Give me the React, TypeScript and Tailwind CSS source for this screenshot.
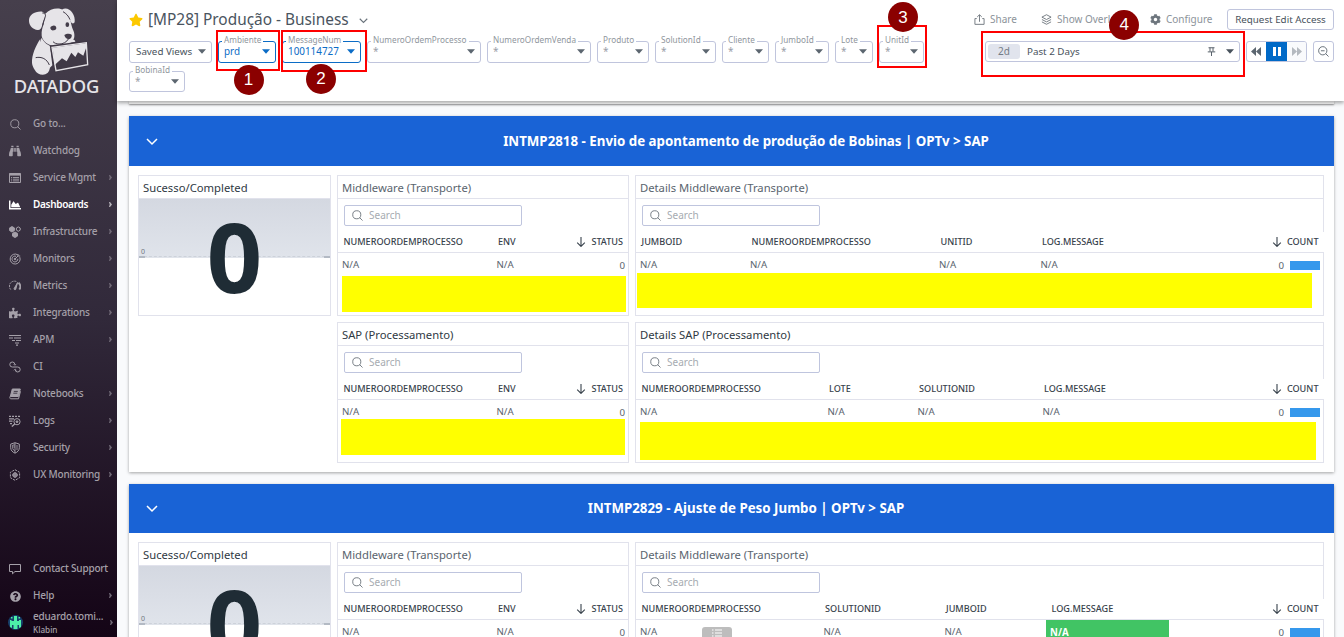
import React from "react";
import { FaBinoculars, FaChartArea, FaPuzzlePiece, FaQuestionCircle, FaStar, FaCog } from "react-icons/fa";

type IconProps = { children: React.ReactNode; className?: string; box?: string };

const Svg = ({ children, className = "size-3", box = "0 0 12 12" }: IconProps) => (
  <svg viewBox={box} className={className} fill="none" stroke="currentColor" strokeWidth="1" shapeRendering="geometricPrecision">
    {children}
  </svg>
);

const SearchIcon = ({ className = "size-3" }: { className?: string }) => (
  <Svg className={className}>
    <circle cx="5.2" cy="5.2" r="4.4" />
    <path d="M8.3 8.3l3.2 3.2" />
  </Svg>
);

const Caret = ({ className = "" }: { className?: string }) => (
  <svg viewBox="0 0 8 5" className={`h-[5px] w-2 shrink-0 ${className}`} fill="currentColor">
    <path d="M0 0.2h8L4 4.8z" />
  </svg>
);

const Chevron = ({ className = "" }: { className?: string }) => (
  <svg viewBox="0 0 12 8" className={className} fill="none" stroke="currentColor">
    <path d="M1 1l5 5 5-5" />
  </svg>
);

const DogLogo = () => (
  <svg viewBox="85 20 186 210" className="h-[70px] w-[62px]" fill="currentColor">
    <path d="M137 40C152 24 178 20 192 30l14 14c8 14 8 32 14 44 6 12 6 26-2 34-12 14-38 18-58 14-20-4-32-16-34-30-1-14 2-24 6-34z" />
    <path d="M88 62C87 44 106 32 128 34l8 6c2 10-6 22-8 34-2 10-8 16-14 15C100 87 89 78 88 62z" />
    <path d="M188 27c10-6 24 0 30 10 6 9 8 18 7 28-1 5-8 6-11 1-5-12-10-22-24-30z" />
    <path d="M126 112c8 16 20 24 34 27l-8 6 6 50-10 10c-8-18-18-28-36-30 0-20 6-44 14-63z" />
    <path d="M122 116c-14 20-26 48-25 72 1 8 4 14 8 20 6 12 20 18 32 14 12-4 16-18 12-30-4-12-16-20-28-16z" />
    <path d="M193 133l18-6 16-3c-1-5-6-7-12-4z" />
    <path d="M128 38c8 0 12 6 8 14-4 10-6 18-8 26M190 34c10 6 16 12 21 24" fill="none" stroke="#433c49" strokeWidth="3" />
    <path d="M108 172c18-4 34 4 41 22" fill="none" stroke="#413a47" strokeWidth="3" />
    <ellipse cx="161" cy="83" rx="9" ry="7" fill="#433c49" transform="rotate(-12 161 83)" />
    <ellipse cx="203" cy="73" rx="5.500" ry="7" fill="#433c49" />
    <path d="M194 104c6-4 16-5 22-1 2 5-2 12-9 14-6-1-12-6-13-13z" fill="#433c49" />
    <path d="M206 116c-4 8-16 16-28 15-8 0-14-3-18-7" fill="none" stroke="#433c49" strokeWidth="3" />
    <path d="M156 140l104-14 4 67-95 19z" fill="#403946" stroke="#403946" strokeWidth="10" />
    <path d="M157 141l103-14 4 66-95 18z" fill="none" stroke="currentColor" strokeWidth="4" />
    <path d="M159 142l100-13 1 12-9 25-16-10-8 14-12-13-14 26-14-9-22 20z" />
  </svg>
);

const ICONS: Record<string, React.ReactNode> = {
  goto: <SearchIcon className="size-[11px]" />,
  watchdog: <FaBinoculars className="size-3" />,
  service: (
    <Svg>
      <path d="M0.5 1.5h11v9h-11z" />
      <path d="M0 2.6h12" strokeWidth="2" />
      <path d="M2 5.5h1.2M4 5.5h6M2 7.2h1.2M4 7.2h6M2 8.9h1.2M4 8.9h6" strokeWidth="0.9" />
    </Svg>
  ),
  dashboards: <FaChartArea className="size-3" />,
  infra: (
    <Svg>
      <path d="M3 .6l2.4 1.3v2.7L3 6 .6 4.600V1.900zM6 6l2.500 1.400v2.700L6 11.500l-2.500-1.400V7.400z" fill="currentColor" />
      <path d="M9.300.9l1.900 1.100v2.200L9.300 5.300 7.400 4.200V2z" />
    </Svg>
  ),
  monitors: (
    <Svg>
      <path d="M10.800 4.200A5 5 0 1 1 8.800 1.800M8.800 5.800A2.900 2.900 0 1 1 7 3.300" />
      <path d="M6 6l3-3M9 3V1M9 3h2.200" />
      <circle cx="6" cy="6" r=".8" fill="currentColor" />
    </Svg>
  ),
  metrics: (
    <Svg>
      <path d="M1.700 9.500A5 5 0 0 1 7.500 1.600" strokeDasharray="2 .8" />
      <path d="M9.500 2.700a5 5 0 0 1 .8 6.800" strokeWidth="2" />
      <path d="M8.600 2.500L5 8.800a1 1 0 0 0 1.700.6z" fill="currentColor" />
    </Svg>
  ),
  integrations: <FaPuzzlePiece className="size-3" />,
  apm: (
    <Svg>
      <path d="M0 1.500h12M0 4h4M5 4h7M3 6.500h3M7 6.500h5M6 9h4M7 11.200h2" strokeWidth="1.200" />
    </Svg>
  ),
  ci: (
    <Svg>
      <path d="M5.800 3.500A2.500 2.500 0 1 0 3.400 6h5.200A2.500 2.500 0 1 1 6.200 8.500" />
      <path d="M4.600 3L5.900 4.300 7.100 3M4.900 9.300L6.200 8l1.300 1.300" strokeWidth=".8" />
    </Svg>
  ),
  notebooks: (
    <Svg>
      <path d="M3.300 1h8L9.400 8.500H1.300z" fill="currentColor" />
      <path d="M1 8.500c-.5 1.500 0 2.300.8 2.300h7.700l2-7.500" />
      <path d="M4.800 3.400h4M4.300 5.200h4" stroke="#2a2230" strokeWidth=".8" />
    </Svg>
  ),
  logs: (
    <Svg>
      <path d="M0 1.300h2M3 1.300h2M6 1.300h2M9 1.300h2M0 3.800h5M0 6.200h3.500M1 8.600h2" strokeWidth="1.200" />
      <circle cx="8" cy="6.700" r="3.100" />
      <circle cx="8" cy="6.700" r=".9" fill="currentColor" />
      <path d="M5.800 8.900l-3 2.700" strokeWidth="1.300" />
    </Svg>
  ),
  security: (
    <Svg>
      <path d="M6 .7l4.300 1.400v3.600c0 2.500-1.700 4.400-4.300 5.500-2.600-1.100-4.300-3-4.300-5.500V2.100z" />
      <path d="M6 1v10M6 3H3.700v3.500c.4 1.200 1.200 2 2.300 2.700M6 5H4.500M8 3v5" strokeWidth=".9" />
    </Svg>
  ),
  ux: (
    <Svg>
      <path d="M6 .7l4.600 2.600v5.400L6 11.300 1.400 8.700V3.300z" strokeDasharray="2.200 1" />
      <circle cx="6" cy="6" r="2.200" fill="currentColor" fillOpacity=".5" />
      <path d="M6 3v6M3 6h6" strokeWidth=".8" />
    </Svg>
  ),
  contact: (
    <Svg>
      <path d="M.5 1.500h11v7H6l-2.500 2.300V8.500h-3z" />
    </Svg>
  ),
  help: <FaQuestionCircle className="size-[11px]" />,
};

const NAV: [string, string, boolean][] = [
  ["goto", "Go to...", false],
  ["watchdog", "Watchdog", false],
  ["service", "Service Mgmt", true],
  ["dashboards", "Dashboards", true],
  ["infra", "Infrastructure", true],
  ["monitors", "Monitors", true],
  ["metrics", "Metrics", true],
  ["integrations", "Integrations", true],
  ["apm", "APM", true],
  ["ci", "CI", false],
  ["notebooks", "Notebooks", true],
  ["logs", "Logs", true],
  ["security", "Security", true],
  ["ux", "UX Monitoring", true],
];

const NavArrow = ({ className = "" }: { className?: string }) => (
  <svg viewBox="0 0 3 5" className={`h-[5px] w-[3px] shrink-0 ${className}`} fill="currentColor">
    <path d="M0 0h1l2 2.500L1 5H0l.7-2.500z" />
  </svg>
);

function NavItem({ icon, label, arrow }: { icon: string; label: string; arrow: boolean }) {
  const active = icon === "dashboards";
  return (
    <div className={`flex h-[27px] items-center pr-[5px] pl-[9px] ${active ? "text-white" : "text-[#a5a0a9]"}`}>
      <span className="flex w-3 shrink-0 justify-center pt-px">{ICONS[icon]}</span>
      <span className={`ml-3 flex-1 text-[10px] whitespace-nowrap ${active ? "font-semibold tracking-[-0.3px]" : "font-medium tracking-[-0.2px]"}`}>
        {label}
      </span>
      {arrow && <NavArrow className={active ? "text-[#b8b4bb]" : "text-[#716a77]"} />}
    </div>
  );
}

function Sidebar() {
  return (
    <nav className="flex h-full w-[117px] shrink-0 flex-col bg-linear-to-b from-[#463f4c] via-[#31293a] to-[#140516]">
      <div className="flex h-[110px] shrink-0 flex-col items-center pt-[7px] text-[#e6e4e8]">
        <DogLogo />
        <div className="-mt-1 pr-1 text-[18.400px] leading-[26px] font-medium tracking-[-0.1px]">DATADOG</div>
      </div>
      {NAV.map(([icon, label, arrow]) => (
        <NavItem key={icon} icon={icon} label={label} arrow={arrow} />
      ))}
      <div className="mt-auto mb-px">
        <NavItem icon="contact" label="Contact Support" arrow={false} />
        <NavItem icon="help" label="Help" arrow />
        <div className="flex h-[27px] items-center pr-1 pl-2 text-[#a5a0a9]">
          <svg viewBox="0 0 15 15" className="size-[15px] shrink-0">
            <circle cx="7.500" cy="7.500" r="7.500" fill="#17406b" />
            <path d="M6 1h3v5h2V5h2v7l-2 1v-3H9.500v4h-4v-4H4v3l-2-1V5h1.500v1H6z" fill="#4df0a8" />
            <path d="M3 2h1.500v1.500H3zM10.500 2H12v1.500h-1.500z" fill="#4df0a8" />
          </svg>
          <div className="ml-2.5 flex-1 leading-[13px] whitespace-nowrap">
            <div className="text-[10px] font-medium tracking-[-0.2px]">eduardo.tomi...</div>
            <div className="text-[8.200px] font-medium">Klabin</div>
          </div>
          <NavArrow className="text-[#716a77]" />
        </div>
      </div>
    </nav>
  );
}

type FilterProps = { label: string; value?: string; width: string; active?: boolean };

function Filter({ label, value, width, active }: FilterProps) {
  return (
    <div
      className={`relative flex h-[21.5px] shrink-0 items-center justify-between rounded-[3px] border pr-[5px] pl-[5px] ${width} ${
        active ? "border-[#0b6cc6] text-[#0b6cc6]" : "border-[#c0c5dd] text-[#5c6670]"
      }`}
    >
      <span className="absolute -top-[8px] left-[3px] bg-white px-0.5 text-[8.200px] leading-3 tracking-[0.02px] text-[#8f969d]">{label}</span>
      <span className={value ? "text-[9.900px]" : "text-[10px] text-[#9aa0a8]"}>{value ?? "*"}</span>
      <Caret />
    </div>
  );
}

const Callout = ({ n, place }: { n: number; place: string }) => (
  <div
    className={`absolute z-30 flex size-[30px] items-center justify-center rounded-full bg-[#8b0000] font-['Liberation_Sans',sans-serif] text-[17px] text-white ${place}`}
  >
    {n}
  </div>
);

const Frame = ({ place }: { place: string }) => <div className={`absolute z-20 border-2 border-[#fe0000] ${place}`} />;

function Header() {
  return (
    <header className="relative z-10 flex h-[101px] shrink-0 flex-col bg-white pl-3 shadow-[0_2px_4px_rgba(0,0,0,0.35)]">
      <div className="flex h-[39px] items-center">
        <FaStar className="size-[14px] text-[#fcc800]" />
        <h1 className="ml-[5px] text-[15.400px] text-[#4a545e]">[MP28] Produção - Business</h1>
        <Chevron className="mt-[3px] ml-2.5 h-[6px] w-[9px] stroke-[1.500] text-[#6b747d]" />
        <div className="mr-2.5 ml-auto flex items-center text-[10px] text-[#8c939a]">
          <Svg className="size-[11px] text-[#6d757d]">
            <path d="M3 5H1v6.300h10V5H9M6 8.500V1M3.500 3.200L6 .8l2.500 2.400" />
          </Svg>
          <span className="ml-[5px] w-[51px]">Share</span>
          <Svg className="size-[11px] text-[#6d757d]">
            <path d="M6 .8l5 2.600-5 2.600-5-2.600zM1 6l5 2.600L11 6M1 8.600l5 2.600 5-2.600" />
          </Svg>
          <span className="ml-[5px] w-[93px]">Show Overlays</span>
          <FaCog className="size-[11px] text-[#6d757d]" />
          <span className="ml-[5px] w-[61px]">Configure</span>
          <span className="flex h-[21px] w-[107px] items-center justify-center rounded-[3px] border border-[#c0c5dd] pt-px text-[9.800px] whitespace-nowrap text-[#48525c]">
            Request Edit Access
          </span>
        </div>
      </div>

      <div className="mt-0.5 flex">
        <div className="flex h-[21.5px] w-[83px] items-center justify-between rounded-[3px] border border-[#c0c5dd] pr-[5px] pl-[6px] text-[9.800px] text-[#48525c]">
          <span className="pt-px whitespace-nowrap">Saved Views</span>
          <Caret className="text-[#5c6670]" />
        </div>
        <div className="ml-1.5 flex gap-1.5">
          <Filter label="Ambiente" value="prd" width="w-[58px]" active />
          <Filter label="MessageNum" value="100114727" width="w-[79px]" active />
          <Filter label="NumeroOrdemProcesso" width="w-[114px]" />
          <Filter label="NumeroOrdemVenda" width="w-[104px]" />
          <Filter label="Produto" width="w-[52px]" />
          <Filter label="SolutionId" width="w-[61px]" />
          <Filter label="Cliente" width="w-[47px]" />
          <Filter label="JumboId" width="w-[54px]" />
          <Filter label="Lote" width="w-[38px]" />
          <Filter label="UnitId" width="w-[45px]" />
        </div>
        <div className="mr-2.5 ml-auto flex">
          <div className="flex h-[21px] w-[255px] items-center rounded-[3px] border border-[#c0c5dd] px-0.5 text-[10px] text-[#48525c]">
            <span className="flex h-[15px] w-8 items-center justify-center rounded-[3px] bg-[#e1e4ed] text-[#747c86]">2d</span>
            <span className="ml-[7px] flex-1 pt-px text-[9.800px]">Past 2 Days</span>
            <Svg className="mr-2.5 size-[9px] text-[#48525c]">
              <path d="M2 1h8M4 1v5M8 1v5M1 6.500h10M6 6.500V12" strokeWidth="1.200" />
            </Svg>
            <Caret className="mr-[3px]" />
          </div>
          <div className="ml-1.5 flex h-[21px] w-[61px] overflow-hidden rounded-[3px] border border-[#c0c5dd]">
            <span className="flex w-[19px] items-center justify-center pr-[2px] text-[#5c6670]">
              <svg viewBox="0 0 10 9" className="h-[9px] w-2.5" fill="currentColor">
                <path d="M5 0v9L0 4.500zM10 0v9L5 4.500z" />
              </svg>
            </span>
            <span className="-my-px flex w-[21px] items-center justify-center gap-0.5 bg-[#0069c7]">
              <i className="h-[9px] w-[3px] bg-white" />
              <i className="h-[9px] w-[3px] bg-white" />
            </span>
            <span className="flex flex-1 items-center justify-center bg-[#f9fafc] text-[#b4b9bf]">
              <svg viewBox="0 0 10 9" className="h-[9px] w-2.5" fill="currentColor">
                <path d="M0 0v9l5-4.500zM5 0v9l5-4.500z" />
              </svg>
            </span>
          </div>
          <div className="ml-1.5 flex size-[21px] items-center justify-center rounded-[3px] border border-[#c0c5dd] text-[#5c6670]">
            <Svg className="size-[11px]">
              <circle cx="5.200" cy="5.200" r="4.500" />
              <path d="M8.500 8.500l3 3M3.200 5.200h4" />
            </Svg>
          </div>
        </div>
      </div>
      <div className="mt-[8px] flex">
        <Filter label="BobinaId" width="w-[56px]" />
      </div>

      <Frame place="left-[99px] top-[30px] h-[41px] w-[64px]" />
      <Frame place="left-[164px] top-[30px] h-[42px] w-[86px]" />
      <Frame place="left-[760px] top-[25px] h-[43px] w-[50px]" />
      <Frame place="left-[864px] top-[31px] h-[46px] w-[264px]" />
      <Callout n={1} place="left-[116.5px] top-[64.5px]" />
      <Callout n={2} place="left-[189px] top-[63.5px]" />
      <Callout n={3} place="left-[771px] top-[2.3px]" />
      <Callout n={4} place="left-[992.3px] top-[9.5px]" />
    </header>
  );
}

function ValueCard() {
  return (
    <div className="flex h-[141px] w-[193px] shrink-0 flex-col border border-[#e1e2ec]">
      <div className="flex h-[23px] shrink-0 items-center border-b border-[#e1e2ec] pt-0.5 pl-[4px] text-[11.250px] text-[#2f3943]">Sucesso/Completed</div>
      <div className="relative flex-1">
        <div className="flex h-[59px] items-end bg-linear-to-b from-[#d4d8e1] to-[#e0e4eb]">
          <div className="flex h-2.5 w-full flex-col justify-end">
            <span className="pl-0.5 text-[7px] leading-2 text-[#6f7780]">0</span>
            <div className="flex h-[2px] items-start justify-between border-t border-dashed border-[#cdd2da]">
              <i className="-mt-px h-[2px] w-1.5 bg-[#b3bac4]" />
              <i className="-mt-px h-[2px] w-1.5 bg-[#b3bac4]" />
            </div>
          </div>
        </div>
        <div className="absolute inset-x-0 top-0 bottom-[3px] flex items-center justify-center text-[97px] leading-none font-bold text-[#1f2c35]">0</div>
      </div>
    </div>
  );
}

type Column = { name: string; width: string; green?: boolean };

type TableProps = {
  title: string;
  dark?: boolean;
  columns: Column[];
  measure: string;
  bar?: boolean;
  mark?: string;
};

function TableCard({ title, dark, columns, measure, bar, mark }: TableProps) {
  return (
    <div className={`relative flex h-[141px] flex-col border border-[#e1e2ec] ${bar ? "w-[689px]" : "w-[292px]"}`}>
      <div
        className={`flex h-[23px] shrink-0 items-center border-b border-[#e1e2ec] pt-0.5 pl-[4px] text-[11.250px] ${dark ? "text-[#2f3943]" : "text-[#5a646e]"}`}
      >
        {title}
      </div>
      <div className="mt-[6px] ml-[6px] flex h-[21px] w-[178px] shrink-0 items-center rounded-[2px] border border-[#bfc5de] pl-[7px]">
        <SearchIcon className="size-[11px] text-[#6d757d]" />
        <span className="ml-[6px] text-[10px] text-[#a6abb1]">Search</span>
      </div>
      <div
        className={`relative mt-[6px] flex h-[20.500px] shrink-0 items-center border-b border-[#e1e2ec] bg-white pt-px pl-[5.500px] text-[9.100px] font-medium text-[#38424c] ${
          bar ? "-mr-px" : ""
        }`}
      >
        {columns.map((c) => (
          <span key={c.name} className={`${c.width} shrink-0 whitespace-nowrap`}>
            {c.name}
          </span>
        ))}
        <span className={`ml-auto flex items-center gap-[5px] ${bar ? "pr-[5.500px]" : "pr-[5px]"}`}>
          <Svg className="size-[10px]" box="0 0 10 10">
            <path d="M5 0v9.300M1.200 5.700L5 9.400l3.800-3.700" strokeWidth="1.100" />
          </Svg>
          {measure}
        </span>
      </div>
      <div className="flex h-[24px] shrink-0 items-center pt-[2px] pl-[4px] text-[9.700px] text-[#5a646e]">
        {columns.map((c) => (
          <span key={c.name} className={`${c.width} shrink-0`}>
            {c.green ? (
              <span className="-mt-[5px] -ml-[4.500px] flex h-[20px] w-[123px] items-center bg-[#41c464] pt-[5px] pl-[4.500px] leading-[13px] font-bold text-white">
                N/A
              </span>
            ) : (
              "N/A"
            )}
          </span>
        ))}
        <span className="ml-auto flex items-center gap-[6px] pt-px pr-[3px]">
          0{bar && <i className="h-[9px] w-[30px] bg-[#3598ec]" />}
        </span>
      </div>
      {mark && <div className={`absolute z-10 bg-[#ffff00] ${mark}`} />}
    </div>
  );
}

const MAIN_COLS: Column[] = [
  { name: "NUMEROORDEMPROCESSO", width: "w-[154.5px]" },
  { name: "ENV", width: "w-[40px]" },
];

function Group({ title, height, headHeight, children }: { title: string; height: string; headHeight: string; children: React.ReactNode }) {
  return (
    <section className={`flex shrink-0 flex-col bg-white shadow-[0_1px_3px_rgba(0,0,0,0.35)] ${height}`}>
      <div className={`flex shrink-0 items-center bg-[#1963d6] pl-[17px] text-white ${headHeight}`}>
        <Chevron className="mt-px h-2 w-3 stroke-[1.500]" />
        <h2 className="flex-1 pt-px text-center text-[13.320px] font-bold">{title}</h2>
      </div>
      <div className="flex gap-1.5 pt-[9px] pl-[9px]">{children}</div>
    </section>
  );
}

export default function App() {
  return (
    <div className="flex h-[637px] w-[1344px] overflow-hidden bg-[#f9fafc] font-['Noto_Sans',sans-serif]">
      <Sidebar />
      <div className="flex h-full w-[1227px] flex-col">
        <Header />
        <main className="flex min-h-0 flex-1 flex-col overflow-hidden pr-2.5 pl-3">
          <div className="h-[3px] shrink-0 bg-white shadow-[0_1px_2px_rgba(0,0,0,0.4)]" />
          <div className="mt-3 flex flex-col gap-3">
            <Group title="INTMP2818 - Envio de apontamento de produção de Bobinas | OPTv > SAP" height="h-[356px]" headHeight="h-[50px]">
              <ValueCard />
              <div className="flex flex-col gap-1.5">
                <TableCard title="Middleware (Transporte)" columns={MAIN_COLS} measure="STATUS" mark="left-[4px] top-[100px] h-[36px] w-[284px]" />
                <TableCard title="SAP (Processamento)" dark columns={MAIN_COLS} measure="STATUS" mark="left-[3px] top-[96px] h-[36px] w-[284px]" />
              </div>
              <div className="flex flex-col gap-1.5">
                <TableCard
                  title="Details Middleware (Transporte)"
                  bar
                  columns={[
                    { name: "JUMBOID", width: "w-[110px]" },
                    { name: "NUMEROORDEMPROCESSO", width: "w-[189px]" },
                    { name: "UNITID", width: "w-[101.500px]" },
                    { name: "LOG.MESSAGE", width: "w-[120px]" },
                  ]}
                  measure="COUNT"
                  mark="left-[1px] top-[97px] h-[35px] w-[675px]"
                />
                <TableCard
                  title="Details SAP (Processamento)"
                  dark
                  bar
                  columns={[
                    { name: "NUMEROORDEMPROCESSO", width: "w-[187.500px]" },
                    { name: "LOTE", width: "w-[90px]" },
                    { name: "SOLUTIONID", width: "w-[125px]" },
                    { name: "LOG.MESSAGE", width: "w-[120px]" },
                  ]}
                  measure="COUNT"
                  mark="left-[4px] top-[99px] h-[38px] w-[676px]"
                />
              </div>
            </Group>
            <Group title="INTMP2829 - Ajuste de Peso Jumbo | OPTv > SAP" height="h-[356px]" headHeight="h-[49px]">
              <ValueCard />
              <TableCard title="Middleware (Transporte)" columns={MAIN_COLS} measure="STATUS" />
              <div className="relative">
                <TableCard
                  title="Details Middleware (Transporte)"
                  bar
                  columns={[
                    { name: "NUMEROORDEMPROCESSO", width: "w-[183.500px]" },
                    { name: "SOLUTIONID", width: "w-[121px]" },
                    { name: "JUMBOID", width: "w-[105.500px]" },
                    { name: "LOG.MESSAGE", width: "w-[120px]", green: true },
                  ]}
                  measure="COUNT"
                />
                <div className="absolute top-[85px] left-[67px] flex h-4 w-[30px] justify-center rounded-[3px] bg-[#bdbdbd] pt-[2px] text-white">
                  <Svg className="size-[10px]" box="0 0 10 10">
                    <path d="M0 1h1.500M3 1h7M0 4h1.500M3 4h7M0 7h1.500M3 7h7" strokeWidth="1.200" />
                  </Svg>
                </div>
              </div>
            </Group>
          </div>
        </main>
      </div>
    </div>
  );
}
